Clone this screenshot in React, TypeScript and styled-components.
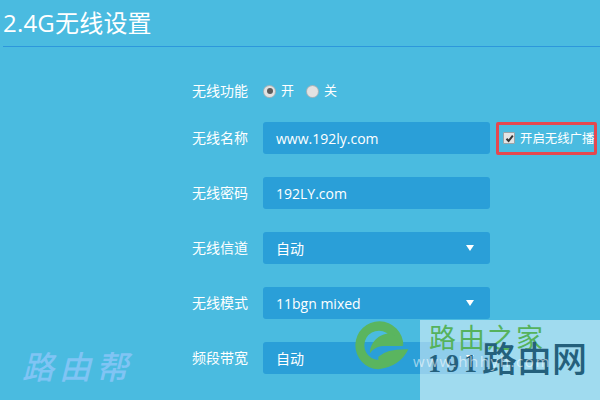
import styled, { createGlobalStyle } from "styled-components";

const GlobalStyle = createGlobalStyle`
  html, body {
    margin: 0;
    padding: 0;
  }
  body {
    font-family: "Open Sans", "Noto Sans CJK SC", sans-serif;
    background: #4abbe0;
  }
`;

const Page = styled.div`
  position: relative;
  width: 600px;
  height: 400px;
  overflow: hidden;
  background: #4abbe0;
  color: #fff;
`;

const Header = styled.h1`
  margin: 0 0 0 3px;
  height: 46px;
  border-bottom: 1px solid #2d97dc;
  font-size: 24px;
  font-weight: 400;
  line-height: 46px;
  letter-spacing: 0.2px;
`;

const Form = styled.div`
  display: flex;
  flex-direction: column;
  gap: 23px;
  padding: 36px 0 0 192px;
`;

const Row = styled.div<{ $short?: boolean }>`
  display: flex;
  align-items: center;
  height: ${(p) => (p.$short ? 16 : 32)}px;
`;

const Label = styled.div`
  width: 71px;
  flex: none;
  font-size: 14px;
  line-height: 16px;
  white-space: nowrap;
`;

const RadioGroup = styled.div`
  display: flex;
  align-items: center;
  gap: 13px;
  margin-left: 1px;
`;

const RadioItem = styled.label`
  display: flex;
  align-items: center;
  gap: 6px;
  font-size: 13px;
  line-height: 16px;
`;

const RadioText = styled.span`
  position: relative;
  top: -1px;
`;

const RadioDot = styled.span<{ $on?: boolean }>`
  display: flex;
  align-items: center;
  justify-content: center;
  box-sizing: border-box;
  width: 11px;
  height: 11px;
  border-radius: 50%;
  background: #e2e2e2;
  box-shadow: 0 0 0 1px #a9b4b9;
  &::after {
    content: "";
    display: ${(p) => (p.$on ? "block" : "none")};
    width: 6px;
    height: 6px;
    border-radius: 50%;
    background: #5c5c5c;
  }
`;

const Field = styled.div`
  display: flex;
  align-items: center;
  justify-content: space-between;
  box-sizing: border-box;
  width: 227px;
  height: 32px;
  padding: 0 16px 0 13px;
  border-radius: 3px;
  background: #2a9fd8;
  font-size: 14px;
  white-space: nowrap;
`;

const Arrow = styled.span`
  width: 0;
  height: 0;
  border-left: 4.5px solid transparent;
  border-right: 4.5px solid transparent;
  border-top: 6px solid #fff;
`;

const Broadcast = styled.label`
  display: flex;
  align-items: center;
  gap: 5px;
  box-sizing: border-box;
  width: 101px;
  height: 33px;
  margin-left: 6px;
  padding-left: 4px;
  border: 3px solid #e5484f;
  border-radius: 2px;
  font-size: 12.4px;
  white-space: nowrap;
`;

const CheckBox = styled.span`
  display: flex;
  align-items: center;
  justify-content: center;
  width: 10px;
  height: 10px;
  flex: none;
  border: 1px solid #9aa4a8;
  border-radius: 1px;
  background: #e4e4e4;
`;

const Overlay = styled.div`
  position: absolute;
  left: 420px;
  top: 320px;
  width: 180px;
  height: 80px;
  background: rgba(255, 255, 255, 0.48);
`;

const LogoMark = styled.svg`
  position: absolute;
  left: 350px;
  top: 316px;
  width: 70px;
  height: 60px;
`;

const HomeMark = styled.div`
  position: absolute;
  left: 429px;
  top: 322px;
  font-size: 27px;
  line-height: 32px;
  letter-spacing: 2px;
  color: #55b25c;
  white-space: nowrap;
`;

const NetMark = styled.div`
  position: absolute;
  left: 428px;
  top: 337px;
  font-family: "Liberation Serif", "Noto Sans CJK SC", serif;
  font-size: 35px;
  font-weight: 500;
  line-height: 40px;
  color: #24607c;
  white-space: nowrap;
`;

const NetName = styled.span`
  font-family: "Noto Sans CJK SC", sans-serif;
`;

const NetDigits = styled.span`
  font-size: 26px;
  font-weight: 700;
  letter-spacing: 5px;
`;

const UrlMark = styled.div`
  position: absolute;
  left: 413px;
  top: 351px;
  font-size: 15px;
  line-height: 20px;
  letter-spacing: 1.6px;
  color: rgba(255, 255, 255, 0.55);
  white-space: nowrap;
`;

const CornerMark = styled.div`
  position: absolute;
  left: 22px;
  top: 345px;
  font-family: "Noto Sans CJK SC", sans-serif;
  font-size: 32px;
  font-style: italic;
  font-weight: 500;
  line-height: 40px;
  letter-spacing: 5px;
  color: #80c4f4;
  white-space: nowrap;
`;

const rows = [
  { label: "无线密码", value: "192LY.com" },
  { label: "无线信道", value: "自动", select: true },
  { label: "无线模式", value: "11bgn mixed", select: true },
  { label: "频段带宽", value: "自动", select: true },
];

export default function App() {
  return (
    <Page>
      <GlobalStyle />
      <Header>2.4G无线设置</Header>
      <Form>
        <Row $short>
          <Label>无线功能</Label>
          <RadioGroup>
            <RadioItem>
              <RadioDot $on />
              <RadioText>开</RadioText>
            </RadioItem>
            <RadioItem>
              <RadioDot />
              <RadioText>关</RadioText>
            </RadioItem>
          </RadioGroup>
        </Row>
        <Row>
          <Label>无线名称</Label>
          <Field>www.192ly.com</Field>
          <Broadcast>
            <CheckBox>
              <svg width="9" height="9" viewBox="0 0 9 9">
                <path d="M1.5 4.8 3.6 7 7.8 1.6" fill="none" stroke="#333" strokeWidth="2" />
              </svg>
            </CheckBox>
            开启无线广播
          </Broadcast>
        </Row>
        {rows.map((r) => (
          <Row key={r.label}>
            <Label>{r.label}</Label>
            <Field>
              {r.value}
              {r.select && <Arrow />}
            </Field>
          </Row>
        ))}
      </Form>

      <CornerMark>路由帮</CornerMark>
      <Overlay />
      <LogoMark viewBox="0 0 210 180">
        <path
          d="M160 88A72 72 0 1 0 85 160Q150 152 175 100Q112 98 85 122L85 132A44 44 0 1 1 125 66Z"
          fill="#5ab55f"
        />
        <path d="M60 112C58 78 95 46 128 54L160 90L100 90C80 92 68 100 60 112Z" fill="#5ab55f" />
      </LogoMark>
      <HomeMark>路由之家</HomeMark>
      <NetMark>
        <NetDigits>191</NetDigits>
        <NetName>路由网</NetName>
      </NetMark>
      <UrlMark>www.hhhyh.com</UrlMark>
    </Page>
  );
}
